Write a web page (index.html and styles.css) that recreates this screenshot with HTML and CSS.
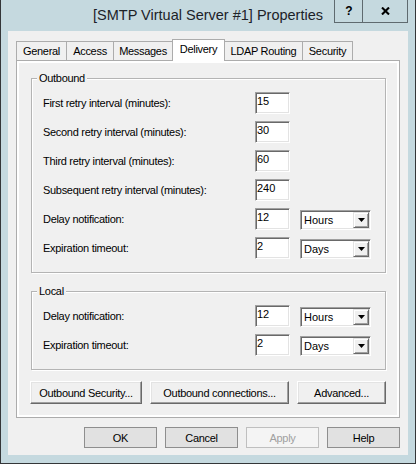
FILE: index.html
```html
<!DOCTYPE html>
<html>
<head>
<meta charset="utf-8">
<link rel="stylesheet" href="styles.css">
</head>
<body>
<div class="window">
  <div class="titlebar">
    <div class="title-spacer"></div>
    <div class="title">[SMTP Virtual Server #1] Properties</div>
    <div class="caption-buttons">
      <div class="cap-btn cap-help">?</div>
      <div class="cap-btn cap-close">
        <svg width="9" height="8" viewBox="0 0 9 8"><path d="M1 0.5 L8 7.5 M8 0.5 L1 7.5" stroke="#000" stroke-width="2.1" fill="none"/></svg>
      </div>
    </div>
  </div>
  <div class="client">
    <div class="tabs">
      <div class="tab t-general">General</div>
      <div class="tab t-access">Access</div>
      <div class="tab t-messages">Messages</div>
      <div class="tab t-delivery active">Delivery</div>
      <div class="tab t-ldap">LDAP Routing</div>
      <div class="tab t-security">Security</div>
    </div>
    <div class="panel">
      <div class="page">
        <div class="group">
          <div class="group-title">Outbound</div>
          <div class="rows">
            <div class="row"><span class="label">First retry interval (minutes):</span><span class="edit">15</span></div>
            <div class="row"><span class="label">Second retry interval (minutes):</span><span class="edit">30</span></div>
            <div class="row"><span class="label">Third retry interval (minutes):</span><span class="edit">60</span></div>
            <div class="row"><span class="label">Subsequent retry interval (minutes):</span><span class="edit">240</span></div>
            <div class="row"><span class="label">Delay notification:</span><span class="edit">12</span>
              <span class="combo"><span class="combo-text">Hours</span><span class="combo-btn"><svg width="7" height="4" viewBox="0 0 7 4"><polygon points="0,0 7,0 3.5,4" fill="#000"/></svg></span></span></div>
            <div class="row"><span class="label">Expiration timeout:</span><span class="edit">2</span>
              <span class="combo"><span class="combo-text">Days</span><span class="combo-btn"><svg width="7" height="4" viewBox="0 0 7 4"><polygon points="0,0 7,0 3.5,4" fill="#000"/></svg></span></span></div>
          </div>
        </div>
        <div class="group group-local">
          <div class="group-title">Local</div>
          <div class="rows">
            <div class="row"><span class="label">Delay notification:</span><span class="edit">12</span>
              <span class="combo"><span class="combo-text">Hours</span><span class="combo-btn"><svg width="7" height="4" viewBox="0 0 7 4"><polygon points="0,0 7,0 3.5,4" fill="#000"/></svg></span></span></div>
            <div class="row"><span class="label">Expiration timeout:</span><span class="edit">2</span>
              <span class="combo"><span class="combo-text">Days</span><span class="combo-btn"><svg width="7" height="4" viewBox="0 0 7 4"><polygon points="0,0 7,0 3.5,4" fill="#000"/></svg></span></span></div>
          </div>
        </div>
        <div class="actions">
          <div class="btn3d w-security">Outbound Security...</div>
          <div class="btn3d w-connections">Outbound connections...</div>
          <div class="btn3d w-advanced">Advanced...</div>
        </div>
      </div>
    </div>
    <div class="dialog-buttons">
      <div class="btn">OK</div>
      <div class="btn">Cancel</div>
      <div class="btn disabled">Apply</div>
      <div class="btn">Help</div>
    </div>
  </div>
</div>
</body>
</html>
```
FILE: styles.css
```css
* { box-sizing: border-box; }
html, body { margin: 0; padding: 0; }
body {
  width: 416px;
  height: 464px;
  overflow: hidden;
  font-family: "Liberation Sans", Arial, sans-serif;
  font-size: 11px;
  color: #000;
}
.window {
  width: 416px;
  height: 464px;
  background: #c5d9df;
  border: 1px solid #343638;
  border-top: 0;
  padding: 0 7px 8px;
  display: flex;
  flex-direction: column;
}
.titlebar {
  height: 31px;
  flex: none;
  display: grid;
  grid-template-columns: 1fr auto 1fr;
}
.title {
  font-size: 14.5px;
  line-height: 31px;
  color: #1c2228;
  white-space: nowrap;
}
.caption-buttons {
  justify-self: end;
  align-self: start;
  display: flex;
  height: 23px;
  border: 1px solid #5f6a6f;
  border-top: 0;
}
.cap-btn {
  height: 22px;
  display: flex;
  align-items: center;
  justify-content: center;
}
.cap-help {
  width: 28px;
  border-right: 1px solid #5f6a6f;
  font-weight: bold;
  font-size: 12px;
  padding-left: 1px;
}
.cap-close { width: 44px; }

.client {
  flex: 1;
  background: #f0f0f0;
  padding: 8px 8px 7px;
  display: flex;
  flex-direction: column;
  letter-spacing: -0.3px;
}
.tabs {
  display: flex;
  align-items: flex-end;
  height: 21px;
  flex: none;
}
.tab {
  height: 19px;
  border: 1px solid #acacac;
  border-bottom: 0;
  margin-right: -1px;
  line-height: 18px;
  background: #f0f0f0;
  white-space: nowrap;
  text-align: center;
}
.t-general { width: 51px; }
.t-access { width: 48px; }
.t-messages { width: 60px; }
.t-delivery { width: 53px; }
.t-ldap { width: 79px; }
.t-security { width: 51px; }
.tab.active {
  height: 22px;
  margin-bottom: -1px;
  background: #fff;
  position: relative;
  z-index: 1;
  padding-bottom: 2px;
}
.panel {
  flex: 1;
  border: 1px solid #acacac;
  background: #fff;
  padding: 2px;
  display: flex;
}
.page {
  flex: 1;
  background: #f0f0f0;
  padding: 15px 11px 0;
}
.group {
  margin-left: 1px;
  border: 1px solid #b4b4b4;
  box-shadow: 1px 1px 0 #fff, inset 1px 1px 0 #fff;
  padding: 0 0 13px 11px;
}
.group-local { margin-top: 18px; }
.group-title {
  margin: -7px 0 0 -6px;
  padding: 0 2px;
  width: fit-content;
  background: #f0f0f0;
  line-height: 13px;
}
.rows {
  margin-top: 7px;
  display: flex;
  flex-direction: column;
  gap: 7px;
}
.row {
  display: flex;
  align-items: center;
  height: 22px;
}
.label {
  width: 212px;
  line-height: 13px;
  white-space: nowrap;
}
.edit {
  width: 35px;
  height: 22px;
  background: #fff;
  border: 1px solid;
  border-color: #a0a0a0 #fff #fff #a0a0a0;
  box-shadow: inset 1px 1px 0 #696969, inset -1px -1px 0 #e3e3e3;
  padding: 2px 1px 0;
  line-height: 13px;
  letter-spacing: 0;
}
.combo {
  width: 71px;
  height: 20px;
  margin-left: 10px;
  align-self: flex-end;
  display: flex;
  align-items: center;
  background: #fff;
  border: 1px solid;
  border-color: #a0a0a0 #fff #fff #a0a0a0;
  box-shadow: inset 1px 1px 0 #696969, inset -1px -1px 0 #e3e3e3;
  padding: 1px;
}
.combo-text {
  flex: 1;
  padding-left: 2px;
  line-height: 13px;
  letter-spacing: 0;
}
.combo-btn {
  width: 16px;
  height: 16px;
  background: #f0f0f0;
  border: 1px solid;
  border-color: #e3e3e3 #696969 #696969 #e3e3e3;
  box-shadow: inset 1px 1px 0 #fff, inset -1px -1px 0 #a0a0a0;
  display: flex;
  align-items: center;
  justify-content: center;
}
.combo-btn svg { display: block; }
.actions {
  display: flex;
  gap: 8px;
  margin-top: 11px;
}
.btn3d {
  height: 23px;
  background: #f0f0f0;
  border: 1px solid;
  border-color: #fff #696969 #696969 #fff;
  box-shadow: inset -1px -1px 0 #a0a0a0, inset 1px 1px 0 #e3e3e3;
  display: flex;
  align-items: center;
  justify-content: center;
  white-space: nowrap;
}
.w-security { width: 112px; }
.w-connections { width: 139px; }
.w-advanced { width: 89px; }
.dialog-buttons {
  flex: none;
  display: flex;
  justify-content: flex-end;
  gap: 8px;
  margin-top: 9px;
}
.btn {
  width: 73px;
  height: 21px;
  border: 1px solid #8e8e8e;
  background: #e1e1e1;
  display: flex;
  align-items: center;
  justify-content: center;
}
.btn.disabled {
  border-color: #bfbfbf;
  background: #f4f4f4;
  color: #a0a0a0;
}
```
